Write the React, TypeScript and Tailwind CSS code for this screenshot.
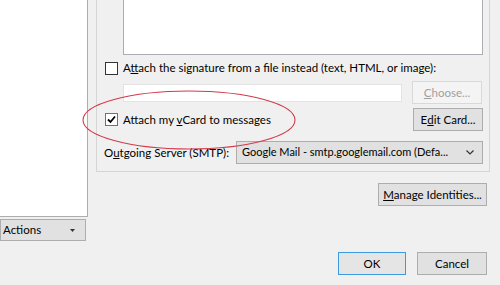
import React from 'react';

const font = { fontFamily: 'Lato, "Noto Sans", sans-serif' };

function Checkbox({ checked }: { checked?: boolean }) {
  return (
    <span
      className={`flex h-[13px] w-[13px] shrink-0 items-center justify-center border bg-white ${
        checked ? 'border-[#3c7fb1]' : 'border-[#333333]'
      }`}
    >
      {checked && (
        <svg width="9" height="9" viewBox="0 0 9 9">
          <path d="M1 4.5 L3.5 7 L8 1.5" fill="none" stroke="#000" strokeWidth="1.8" />
        </svg>
      )}
    </span>
  );
}

function Button({
  children,
  className = '',
  disabled,
  primary,
}: {
  children: React.ReactNode;
  className?: string;
  disabled?: boolean;
  primary?: boolean;
}) {
  return (
    <div
      className={`flex h-[23px] shrink-0 items-center justify-center whitespace-nowrap border ${
        disabled
          ? 'border-[#d9d9d9] bg-[#f4f4f4] text-[#a0a0a0]'
          : primary
          ? 'border-[#3c9ae0] bg-[#e5e5e5] text-black'
          : 'border-[#adadad] bg-[#e1e1e1] text-black'
      } ${className}`}
    >
      {children}
    </div>
  );
}

export default function App() {
  return (
    <div
      className="relative flex h-[285px] w-[500px] overflow-hidden whitespace-nowrap bg-[#f0f0f0] text-[11.5px] text-black"
      style={font}
    >
      {/* left list + actions */}
      <div className="flex w-[88px] shrink-0 flex-col">
        <div className="h-[217px] border-r border-b border-[#adadad] bg-white" />
        <div className="mt-[2px] flex h-[22px] w-[86px] items-center justify-between border border-[#adadad] bg-[#e1e1e1] pl-[2px] pr-[10px]">
          <span>Actions</span>
          <svg width="5" height="3" viewBox="0 0 5 3">
            <path d="M0 0 H5 L2.5 3 Z" fill="#333" />
          </svg>
        </div>
      </div>

      {/* right side */}
      <div className="ml-[8px] flex w-[394px] flex-col">
        <div className="flex h-[172px] flex-col border-x border-b border-[#d5d5d5] pl-[8px] pr-[6px]">
          <div className="ml-[18px] h-[55px] border-x border-b border-[#abadb3] bg-white" />

          <div className="flex h-[26px] items-center gap-[5px]">
            <Checkbox />
            <span>
              A<span className="underline">t</span>tach the signature from a file instead (text, HTML, or image):
            </span>
          </div>

          <div className="flex h-[23px] items-center">
            <div className="ml-[18px] h-[18px] w-[279px] border border-[#e3e3e3] bg-white" />
            <Button disabled className="ml-[10px] w-[70px]">
              <span className="underline">C</span>hoose...
            </Button>
          </div>

          <div className="mt-[4px] flex h-[23px] items-center">
            <Checkbox checked />
            <span className="ml-[5px]">
              Attach my <span className="underline">v</span>Card to messages
            </span>
            <Button className="ml-auto w-[70px]">
              E<span className="underline">d</span>it Card...
            </Button>
          </div>

          <div className="mt-[10px] flex h-[23px] items-center">
            <span className="-ml-[1px] shrink-0">
              O<span className="underline">u</span>tgoing Server (SMTP):
            </span>
            <div className="ml-auto flex h-[23px] w-[247px] shrink-0 items-center justify-between border border-[#adadad] bg-[#e1e1e1] pl-[5px] pr-[8px]">
              <span className="overflow-hidden text-[11px]">Google Mail - smtp.googlemail.com (Defa...</span>
              <svg width="8" height="5" viewBox="0 0 8 5" className="shrink-0">
                <path d="M0.5 0.5 L4 4 L7.5 0.5" fill="none" stroke="#333" strokeWidth="1.2" />
              </svg>
            </div>
          </div>
        </div>

        <div className="mt-[11px] flex pr-[3px]">
          <Button className="ml-auto w-[109px]">
            <span className="underline">M</span>anage Identities...
          </Button>
        </div>

        <div className="mt-[46px] flex gap-[11px] pr-[3px]">
          <Button primary className="ml-auto w-[68px]">
            OK
          </Button>
          <Button className="w-[70px]">Cancel</Button>
        </div>
      </div>

      {/* red annotation ellipse */}
      <svg className="pointer-events-none absolute left-0 top-0" width="500" height="285">
        <ellipse cx="189" cy="120" rx="106" ry="29" fill="none" stroke="#d23a4a" strokeWidth="1.1" />
      </svg>
    </div>
  );
}
